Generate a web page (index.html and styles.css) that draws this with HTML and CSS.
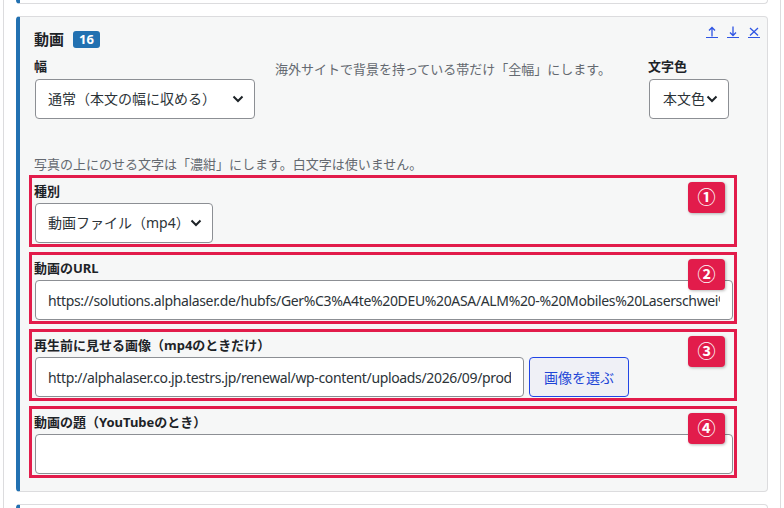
FILE: index.html
```html
<!DOCTYPE html>
<html lang="ja">
<head>
<meta charset="utf-8">
<title>動画ブロック</title>
<link rel="stylesheet" href="styles.css">
</head>
<body>
<div class="frame">
  <div class="card card-prev"></div>

  <section class="card card-main">
    <header class="card-head">
      <span class="card-title">動画</span>
      <span class="count">16</span>
      <nav class="actions">
        <a class="act" href="#" title="上へ"><svg width="12" height="11" viewBox="0 0 12 11"><path d="M6 1.5V10.5M3 4.5L6 1.5L9 4.5" fill="none" stroke="currentColor" stroke-width="1.3"/></svg></a>
        <a class="act" href="#" title="下へ"><svg width="12" height="11" viewBox="0 0 12 11"><path d="M6 0.5V9.5M3 6.5L6 9.5L9 6.5" fill="none" stroke="currentColor" stroke-width="1.3"/></svg></a>
        <a class="act" href="#" title="削除"><svg width="12" height="11" viewBox="0 0 12 11"><path d="M2 2L10 9.5M10 2L2 9.5" fill="none" stroke="currentColor" stroke-width="1.3"/></svg></a>
      </nav>
    </header>

    <div class="row-top">
      <div class="fld">
        <div class="lbl">幅</div>
        <div class="sel sel-width"><span>通常（本文の幅に収める）</span><svg class="chev" width="12" height="8" viewBox="0 0 12 8"><path d="M1.5 1.5L6 6L10.5 1.5" fill="none" stroke="#1d2327" stroke-width="2"/></svg></div>
      </div>
      <p class="desc">海外サイトで背景を持っている帯だけ「全幅」にします。</p>
      <div class="fld fld-color">
        <div class="lbl">文字色</div>
        <div class="sel sel-color"><span>本文色</span><svg class="chev" width="12" height="8" viewBox="0 0 12 8"><path d="M1.5 1.5L6 6L10.5 1.5" fill="none" stroke="#1d2327" stroke-width="2"/></svg></div>
      </div>
    </div>

    <p class="note">写真の上にのせる文字は「濃紺」にします。白文字は使いません。</p>

    <div class="fields">
      <div class="fld mark">
        <div class="lbl">種別</div>
        <div class="sel sel-kind"><span>動画ファイル（mp4）</span><svg class="chev" width="12" height="8" viewBox="0 0 12 8"><path d="M1.5 1.5L6 6L10.5 1.5" fill="none" stroke="#1d2327" stroke-width="2"/></svg></div>
        <span class="num">①</span>
      </div>

      <div class="fld mark">
        <div class="lbl">動画のURL</div>
        <input class="txt" type="text" value="https://solutions.alphalaser.de/hubfs/Ger%C3%A4te%20DEU%20ASA/ALM%20-%20Mobiles%20Laserschwei%C3%9Fger%C3%A4t.mp4">
        <span class="num">②</span>
      </div>

      <div class="fld mark">
        <div class="lbl">再生前に見せる画像（mp4のときだけ）</div>
        <div class="img-row">
          <input class="txt txt-img" type="text" value="http://alphalaser.co.jp.testrs.jp/renewal/wp-content/uploads/2026/09/product-alm.jpg">
          <button class="pick" type="button">画像を選ぶ</button>
        </div>
        <span class="num">③</span>
      </div>

      <div class="fld mark">
        <div class="lbl">動画の題（YouTubeのとき）</div>
        <input class="txt" type="text" value="">
        <span class="num">④</span>
      </div>
    </div>
  </section>

  <div class="card card-next"></div>
</div>
</body>
</html>
```

FILE: styles.css
```css
* { box-sizing: border-box; }

html, body {
  margin: 0;
  padding: 0;
  background: #fff;
  height: 508px;
  overflow: hidden;
}

body {
  font-family: "Noto Sans", "Noto Sans CJK JP", sans-serif;
  color: #1d2327;
  font-size: 13px;
  line-height: 18px;
}

.frame {
  margin: 0 3px;
  height: 508px;
  border-left: 1px solid #dcdcde;
  border-right: 1px solid #dcdcde;
  padding: 0 12px;
  overflow: hidden;
}

.card {
  border: 1px solid #dcdcde;
  border-left: 4px solid #2271b1;
  border-radius: 4px;
}

.card-prev {
  height: 4px;
  border-top: none;
  border-radius: 0 0 4px 4px;
  background: #fff;
}

.card-next {
  height: 40px;
  margin-top: 12px;
  background: #fff;
}

.card-main {
  margin-top: 12px;
  background: #f6f7f7;
  padding: 11px 34px 17px 14px;
}

/* header */
.card-head {
  display: flex;
  align-items: center;
  height: 22px;
}

.card-title {
  font-size: 15px;
  font-weight: 700;
  line-height: 22px;
}

.count {
  margin-left: 9px;
  height: 17px;
  padding: 0 6px;
  border-radius: 3px;
  background: #2271b1;
  color: #fff;
  font-size: 13px;
  font-weight: 700;
  line-height: 17px;
}

.actions {
  margin-left: auto;
  margin-right: -27px;
  align-self: flex-start;
  margin-top: -2px;
  display: flex;
  gap: 9px;
}

.act {
  display: block;
  width: 12px;
  height: 12px;
  color: #2f55e4;
  border-bottom: 1px solid #2f55e4;
}

.act svg { display: block; }

/* first row */
.row-top {
  display: flex;
  align-items: flex-start;
  margin-top: 7px;
}

.lbl {
  font-size: 13px;
  font-weight: 700;
  line-height: 18px;
  margin-bottom: 4px;
  color: #1d2327;
}

.desc {
  margin: 3px 0 0 20px;
  color: #646970;
  font-size: 13px;
  line-height: 18px;
}

.fld-color {
  margin-left: auto;
  margin-right: 4px;
}

.sel {
  display: flex;
  align-items: center;
  justify-content: space-between;
  height: 40px;
  margin-left: 1px;
  padding: 0 10px 0 12px;
  background: #fff;
  border: 1px solid #8c8f94;
  border-radius: 4px;
  font-size: 14px;
  color: #2c3338;
  white-space: nowrap;
}

.sel-width { width: 220px; }
.sel-color { width: 80px; padding-left: 13px; }
.sel-kind { width: 178px; }

.chev { flex: none; display: block; }

.note {
  margin: 36px 0 0;
  color: #646970;
  font-size: 13px;
  line-height: 18px;
}

/* annotated fields */
.fields {
  margin-top: 9px;
  display: flex;
  flex-direction: column;
  gap: 16px;
}

.mark {
  position: relative;
}

.mark .lbl { margin-bottom: 3px; }

.mark::after {
  content: "";
  position: absolute;
  top: -7px;
  bottom: -4px;
  left: -5px;
  right: -4px;
  border: 3px solid #e21c4b;
  pointer-events: none;
}

.num {
  position: absolute;
  top: 0;
  right: 8px;
  z-index: 2;
  width: 37px;
  height: 31px;
  border-radius: 4px;
  background: #e21c4b;
  box-shadow: 1px 1px 3px rgba(0, 0, 0, 0.28);
  color: #fff;
  font-size: 18px;
  font-weight: 700;
  line-height: 31px;
  text-align: center;
}

.txt {
  display: block;
  width: calc(100% - 1px);
  height: 40px;
  margin: 0 0 0 1px;
  padding: 0 12px;
  background: #fff;
  border: 1px solid #8c8f94;
  border-radius: 4px;
  font-family: "Noto Sans", "Noto Sans CJK JP", sans-serif;
  font-size: 14px;
  letter-spacing: -0.35px;
  color: #2c3338;
  outline: none;
}

.img-row {
  display: flex;
  gap: 5px;
}

.txt-img { width: 489px; flex: none; }

.pick {
  flex: none;
  width: 100px;
  height: 40px;
  background: #eff0f6;
  border: 1px solid #2145e6;
  border-radius: 4px;
  color: #2145d6;
  font-family: "Noto Sans", "Noto Sans CJK JP", sans-serif;
  font-size: 14px;
  padding: 0;
}
```
